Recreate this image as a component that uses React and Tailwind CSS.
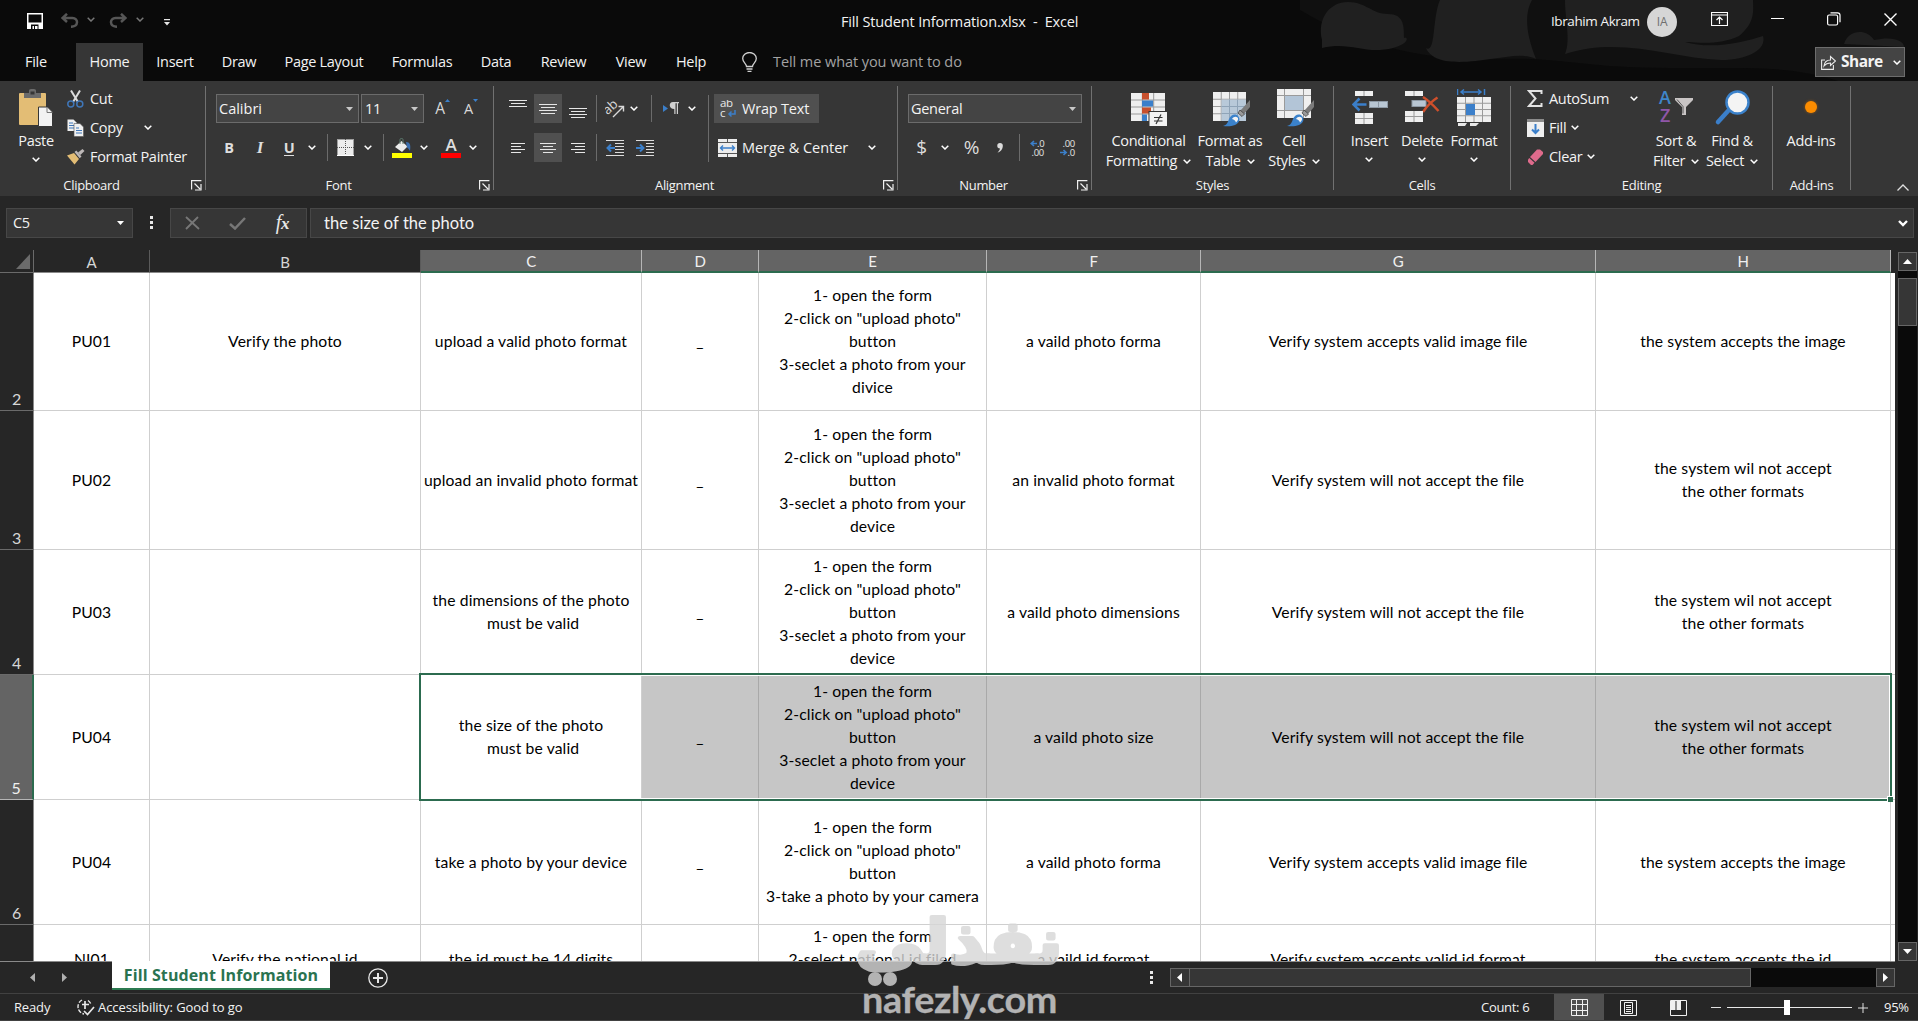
import React from "react";
import clsx from "clsx";

const columns = [
  { name: "A", width: 116 },
  { name: "B", width: 271 },
  { name: "C", width: 221, selected: true },
  { name: "D", width: 117, selected: true },
  { name: "E", width: 228, selected: true },
  { name: "F", width: 214, selected: true },
  { name: "G", width: 395, selected: true },
  { name: "H", width: 295, selected: true },
];

const steps = (last) => `1- open the form\n2-click on "upload photo"\nbutton\n3-seclet a photo from your\n${last}`;

const rows = [
  {
    number: 2,
    height: 138,
    cells: ["PU01", "Verify the photo", "upload a valid photo format", "_", steps("divice"), "a vaild photo forma", "Verify system accepts valid image file", "the system accepts the image"],
  },
  {
    number: 3,
    height: 139,
    cells: ["PU02", "", "upload an invalid photo format", "_", steps("device"), "an invalid photo format", "Verify system will not accept the file", "the system wil not accept\nthe other formats"],
  },
  {
    number: 4,
    height: 125,
    cells: ["PU03", "", "the dimensions of the photo\n\u00a0must be valid", "_", steps("device"), "a vaild photo dimensions", "Verify system will not accept the file", "the system wil not accept\nthe other formats"],
  },
  {
    number: 5,
    height: 125,
    selected: true,
    cells: ["PU04", "", "the size of the photo\n\u00a0must be valid", "_", steps("device"), "a vaild photo size", "Verify system will not accept the file", "the system wil not accept\nthe other formats"],
  },
  {
    number: 6,
    height: 125,
    cells: ["PU04", "", "take a photo by your device", "_", '1- open the form\n2-click on "upload photo"\nbutton\n3-take a photo by your camera', "a vaild photo forma", "Verify system accepts valid image file", "the system accepts the image"],
  },
  {
    number: 7,
    height: 69,
    cells: ["NI01", "Verify the national id", "the id must be 14 digits", "", "1- open the form\n2-select national id filed\n\u00a0", "a vaild id format", "Verify system accepts valid id format", "the system accepts the id"],
  },
];

const tabs = [
  { name: "Home", width: "w-[67px]", active: true },
  { name: "Insert", width: "w-16" },
  { name: "Draw", width: "w-16" },
  { name: "Page Layout", width: "w-[106px]" },
  { name: "Formulas", width: "w-[90px]" },
  { name: "Data", width: "w-[58px]" },
  { name: "Review", width: "w-[77px]" },
  { name: "View", width: "w-[58px]" },
  { name: "Help", width: "w-[62px]" },
];

function Chevron({ className = "text-white" }) {
  return (
    <svg className={clsx("h-[5px] w-2 shrink-0", className)} viewBox="0 0 8 5" fill="none" stroke="currentColor" strokeWidth="1.5">
      <path d="M.7.7 4 4 7.3.7" />
    </svg>
  );
}

function Caret({ className = "text-[#c8c8c8]" }) {
  return (
    <svg className={clsx("h-1 w-[7px] shrink-0", className)} viewBox="0 0 7 4" fill="currentColor">
      <path d="M0 0h7L3.5 4z" />
    </svg>
  );
}

function Slot({ className, children }) {
  return <div className={clsx("flex h-full shrink-0 items-center justify-center", className)}>{children}</div>;
}

function Divider({ className = "h-[27px]" }) {
  return <div className={clsx("w-px bg-[#6b6b6b]", className)} />;
}

function Group({ label, className, launcher, children }) {
  return (
    <div className={clsx("flex shrink-0", className)}>
      <div className="flex min-w-0 flex-1 flex-col">
        <div className="h-24">{children}</div>
        <div className="flex h-[18px] items-center text-[13px] tracking-[-0.3px]">
          <span className="flex-1 text-center">{label}</span>
          {launcher && (
            <div className="w-[22px] pb-px pl-[8px]">
              <svg className="size-[11px]" viewBox="0 0 11 11" fill="none" stroke="#f0f0f0" strokeWidth="1.2">
                <path d="M.6 9.5V.6h9.8M3.500 3.500l5.500 5.500M10 4v6H4" />
              </svg>
            </div>
          )}
        </div>
      </div>
      <div className="mt-[5px] h-[104px] w-px bg-[#717171]" />
    </div>
  );
}

function BigButton({ className, icon, lines, chevron = "inline" }) {
  return (
    <div className={clsx("flex flex-col items-center pt-2", className)}>
      <div className="flex h-[42px] items-start">{icon}</div>
      <div className="flex flex-col items-center leading-5 whitespace-nowrap">
        {lines.map((line, i) => (
          <span key={line} className="flex h-5 items-center gap-[6px]">
            {line}
            {chevron === "inline" && i === lines.length - 1 && <Chevron />}
          </span>
        ))}
        {chevron === "below" && <span className="flex h-4 items-center"><Chevron /></span>}
      </div>
    </div>
  );
}

/* Horizontal line sets used by the alignment buttons: [x, width] per line */
function Lines({ lines, height = 16, top = 0 }) {
  return (
    <svg width="18" height={height} viewBox={`0 0 18 ${height}`} fill="#e6e6e6">
      {lines.map(([x, w], i) => (
        <rect key={i} x={x} y={top + i * 3} width={w} height="1" />
      ))}
    </svg>
  );
}

function PasteIcon() {
  return (
    <svg width="34" height="38" viewBox="0 0 34 38">
      <rect y="4" width="27" height="32" rx="1" fill="#e3bd75" />
      <path d="M5 4h5V1.5Q10 0 12 0h3q2 0 2 1.500V4h5v5H5z" fill="#6b6b6b" />
      <rect x="11.500" y="2.500" width="4" height="3" fill="#363636" />
      <path d="M19.500 18h9l5 5v14.500h-14z" fill="#f2f2f2" stroke="#363636" />
      <path d="M28 18v5.500h5.500" fill="none" stroke="#777" />
    </svg>
  );
}

function CutIcon() {
  return (
    <svg width="17" height="18" viewBox="0 0 17 18" fill="none">
      <path d="M4 .5 11 12M13 .5 6 12" stroke="#dcdcdc" strokeWidth="2" />
      <circle cx="3.800" cy="14" r="3" stroke="#3f76b8" strokeWidth="1.500" />
      <circle cx="12.800" cy="14" r="3" stroke="#3f76b8" strokeWidth="1.500" />
    </svg>
  );
}

function CopyIcon() {
  return (
    <svg width="17" height="18" viewBox="0 0 17 18">
      <path d="M.5.500h6l3 3V12h-9z" fill="#f0f0f0" />
      <path d="M2 4h4M2 6.500h6M2 9h5" stroke="#3f76b8" />
      <path d="M7 4.500h6l3.500 3.500v9.500H7z" fill="#f0f0f0" stroke="#555" strokeWidth=".6" />
      <path d="M9 9h3M9 11.500h6M9 14h6" stroke="#3f76b8" />
    </svg>
  );
}

function BrushIcon() {
  return (
    <svg width="18" height="16" viewBox="0 0 18 16">
      <path d="M0 6.500 7 4l5 6-4.500 5.500z" fill="#e3bd75" />
      <path d="m7.500 3 1.800-1.500 5.200 6-1.800 1.800z" fill="#bdb8b8" />
      <path d="m11 3.500 4.500-3.500 2 2-4.200 4z" fill="#bdb8b8" />
    </svg>
  );
}

function TableGrid({ x, y, w, h, cols, rowCount }) {
  const cw = w / cols;
  const rh = h / rowCount;
  return (
    <g>
      <rect x={x} y={y} width={w} height={h} fill="#efefef" />
      {Array.from({ length: cols - 1 }, (_, i) => (
        <rect key={`c${i}`} x={x + cw * (i + 1) - 0.5} y={y} width="1" height={h} fill="#9a9a9a" />
      ))}
      {Array.from({ length: rowCount - 1 }, (_, i) => (
        <rect key={`r${i}`} x={x} y={y + rh * (i + 1) - 0.5} width={w} height="1" fill="#9a9a9a" />
      ))}
    </g>
  );
}

function PaintBrush() {
  return (
    <g>
      <path d="M37 11v7l-6 7-4-3z" fill="#7b7b7b" />
      <path d="m27 21 4.500 4-2.500 2.500-4-3.500z" fill="#9a9a9a" stroke="#363636" strokeWidth=".7" />
      <path d="M10 37c4-1 5-4 6-7 1.500-4 6-6 9-3 3 3.500 1 7-3 9-3.500 1.500-8 1.500-12 1z" fill="#3b82cb" />
      <path d="M19 30c1.500-2.500 4-3 5.500-1.500s0 3.500-1.500 5c-.5-2-2-3-4-3.500z" fill="#f4f4f4" />
    </g>
  );
}

function ConditionalIcon() {
  return (
    <svg className="ml-px" width="37" height="38" viewBox="0 0 37 38">
      <TableGrid x={0} y={4} w={34} h={28} cols={3} rowCount={4} />
      <rect x="11" y="4" width="7" height="6.500" fill="#c8502d" />
      <rect x="11" y="11.500" width="11" height="6" fill="#3b7fca" />
      <rect x="11" y="18.500" width="9" height="6" fill="#c8502d" />
      <rect x="11" y="25.500" width="5" height="6.500" fill="#3b7fca" />
      <rect x="18" y="22.500" width="18.500" height="15" fill="#f3f3f3" stroke="#363636" />
      <path d="M23 28.500h8.500M23 32h8.500M30 25.500 25 35" stroke="#333" strokeWidth="1.200" />
    </svg>
  );
}

function FormatTableIcon() {
  return (
    <svg className="ml-1" width="38" height="38" viewBox="0 0 38 38">
      <TableGrid x={0} y={3} w={33} h={29} cols={4} rowCount={4} />
      <path d="M8.500 10.500H33V32H8.500z" fill="#b8c9d9" />
      <path d="M16.500 10.500V32M24.500 10.500V32M8.500 17.500H33M8.500 24.500H33" stroke="#8fa4b8" />
      <PaintBrush />
    </svg>
  );
}

function CellStylesIcon() {
  return (
    <svg className="ml-1" width="38" height="38" viewBox="0 0 38 38">
      <rect width="34" height="29" fill="#efefef" />
      <path d="M0 6.500h34M0 21.500h34M7.500 0v29M26.500 0v29" stroke="#9a9a9a" />
      <rect x="8" y="7" width="18" height="14" fill="#b3c5d7" />
      <PaintBrush />
    </svg>
  );
}

function InsertIcon() {
  return (
    <svg width="36" height="38" viewBox="0 0 36 38">
      <TableGrid x={3} y={2} w={18} h={5} cols={2} rowCount={1} />
      <path d="M14.500 15.500H2M7.500 9.500l-6 6 6 6" fill="none" stroke="#3b7fca" strokeWidth="2.500" />
      <rect x="17.500" y="12.500" width="18" height="6" fill="#b8c6d3" stroke="#8d99a5" />
      <path d="M26.500 12v7" stroke="#8d99a5" />
      <TableGrid x={3} y={24} w={18} h={11} cols={2} rowCount={2} />
    </svg>
  );
}

function DeleteIcon() {
  return (
    <svg width="36" height="38" viewBox="0 0 36 38">
      <TableGrid x={1} y={2} w={18} h={5} cols={2} rowCount={1} />
      <rect x="8" y="11.500" width="14" height="6" fill="#b8c6d3" stroke="#8d99a5" />
      <path d="M19 8c5 3 11 9 15.500 14M33.500 8.500C28 12 23 17 19 23" fill="none" stroke="#cf4f2b" strokeWidth="2.500" />
      <TableGrid x={1} y={22} w={18} h={11} cols={2} rowCount={2} />
    </svg>
  );
}

function FormatIcon() {
  return (
    <svg width="34" height="38" viewBox="0 0 34 38">
      <path d="M.5 0v6M27.500 0v6M4 3h20M7 .5 4 3l3 2.500M21 .5 24 3l-3 2.500" fill="none" stroke="#3b7fca" strokeWidth="1.500" />
      <TableGrid x={0} y={8} w={34} h={25} cols={4} rowCount={4} />
      <rect x="9" y="15" width="9" height="11" fill="#3b7fca" />
      <path d="M1 34h9l-2 3H1zM13 34h9l-3 3h-6z" fill="#e8e8e8" />
    </svg>
  );
}

function SortIcon() {
  return (
    <svg width="36" height="38" viewBox="0 0 36 38">
      <text x="1" y="15" fontSize="18" fill="#3f86c9" fontFamily="Open Sans, sans-serif" fontWeight="600">A</text>
      <text x="2" y="33" fontSize="18" fill="#8f56a8" fontFamily="Open Sans, sans-serif" fontWeight="600">Z</text>
      <path d="M17 9h18v2l-7 7v8h-4v-8l-7-7z" fill="#c9c5c5" />
      <path d="m19 10.500 6 7v7" fill="none" stroke="#555" />
    </svg>
  );
}

function FindIcon() {
  return (
    <svg width="36" height="38" viewBox="0 0 36 38">
      <path d="M14 22 4 33" stroke="#3b7fca" strokeWidth="4.500" strokeLinecap="round" />
      <circle cx="23.500" cy="13.500" r="11" fill="#f4f4f4" stroke="#3b82cb" strokeWidth="2.500" />
    </svg>
  );
}

function TitleArt() {
  return (
    <svg className="absolute top-0 right-0" width="618" height="81" viewBox="0 0 618 81">
      <path d="M0 0h618v81h-80c-60-20-120-10-210-14-50-2-80-10-130-8C130 62 60 46 0 10z" fill="#101010" />
      <g fill="#202020">
        <path d="M22 40c-5-22 8-38 26-38s24 12 40 12 16 12 16 24c6-2 4 10-24 12-20 1-34-8-58-2z" />
        <path d="M126 48c10 6 6-30 14-48h92c-8 14-6 34 4 59-12-6-28-2-46 0-20 3-56 8-64-11z" />
        <path d="M265 54c6-14 0-34 0-54h188c0 10 3 22-14 36-22 10-40 6-54 6 26 8 60 0 78-6 4 14-16 24-42 24-50-2-100-24-156-6z" />
        <path d="M544 44c4-14 22-16 30-4 18-4 30 0 30 7z" />
      </g>
    </svg>
  );
}

function TitleBar() {
  return (
    <header className="relative h-[81px] overflow-hidden bg-[#0a0a0a]">
      <TitleArt />
      <div className="relative flex h-[43px] items-center">
        <div className="flex w-[841px] items-center pl-[27px]">
          <svg className="mb-[2px]" width="16" height="16" viewBox="0 0 16 16">
            <path fill="#fff" fillRule="evenodd" d="M0 0h16v16H0zM1.500 1.500v8h13v-8zM4 11.500V16h1.500v-3h1.500v3h1v-3h2.500v3h1v-4.500z" />
          </svg>
          <svg className="mb-[2px] ml-[18px]" width="18" height="15" viewBox="0 0 18 15" fill="none" stroke="#565656" strokeWidth="2.500">
            <path d="M6 .8 1.500 5 6 9M2 5h9.500c6 0 6.500 8.500-1.500 8.800" />
          </svg>
          <Chevron className="mb-1 ml-2 text-[#777]" />
          <svg className="mb-[2px] ml-[14px]" width="18" height="15" viewBox="0 0 18 15" fill="none" stroke="#565656" strokeWidth="2.500">
            <path d="M12 .8 16.500 5 12 9M16 5H6.500c-6 0-6.500 8.500 1.500 8.800" />
          </svg>
          <Chevron className="mb-1 ml-[9px] text-[#777]" />
          <svg className="mt-[2px] ml-[20px]" width="6" height="7" viewBox="0 0 6 7" fill="#e6e6e6">
            <path d="M0 0h6v1.200H0zM0 3h6L3 6.500z" />
          </svg>
        </div>
        <div className="w-[710px] tracking-[-0.15px] whitespace-pre">Fill Student Information.xlsx{"  "}-{"  "}Excel</div>
        <div className="w-[96px] text-[13.500px] tracking-[-0.4px] whitespace-nowrap">Ibrahim Akram</div>
        <div className="flex size-[30px] items-center justify-center rounded-full bg-[#d6d6d6] text-xs text-[#6f6f6f]">IA</div>
        <svg className="mb-[5px] ml-[34px]" width="17" height="14" viewBox="0 0 17 14" fill="none" stroke="#fff">
          <path d="M.5.500h16v13H.5zM.5 3h16M8.500 12V5.500M5.500 8l3-3 3 3" strokeWidth="1.200" />
        </svg>
        <div className="mb-[7px] ml-[43px] h-px w-[13px] bg-white" />
        <svg className="mb-[5px] ml-[43px]" width="14" height="14" viewBox="0 0 14 14" fill="none" stroke="#fff" strokeWidth="1.200">
          <rect x=".6" y="3" width="10" height="10" rx="1.500" />
          <path d="M3.500.800h7q2.500 0 2.500 2.500v7" />
        </svg>
        <svg className="mb-[5px] ml-[43px]" width="13" height="13" viewBox="0 0 13 13" stroke="#fff" strokeWidth="1.400">
          <path d="m.5.500 12 12M12.500.500l-12 12" />
        </svg>
      </div>
      <nav className="relative flex h-[38px] items-center">
        <div className="w-[76px] pl-[25px]">File</div>
        {tabs.map((tab) => (
          <div key={tab.name} className={clsx("flex h-full items-center justify-center whitespace-nowrap", tab.width, tab.active && "bg-[#363636]")}>
            {tab.name}
          </div>
        ))}
        <svg className="ml-5" width="15" height="20" viewBox="0 0 15 20" fill="none" stroke="#d0d0d0" strokeWidth="1.300">
          <path d="M4.500 14.500c0-3-3.800-4-3.800-8a6.800 6 0 0 1 13.600 0c0 4-3.800 5-3.800 8zM4.500 17h6M5.500 19.300h4" />
        </svg>
        <div className="ml-4 w-[1042px] tracking-[-0.07px] text-[#a3a3a3]">Tell me what you want to do</div>
        <div className="flex h-[30px] w-[90px] items-center border border-[#6d6d6d] bg-[#444] pl-[5px]">
          <svg width="15" height="15" viewBox="0 0 15 15" fill="none" stroke="#e8e8e8" strokeWidth="1.100">
            <path d="M4 5H.6v9.400h11.800V10M3 11c.5-4 3-6 6.500-6V1.500l5 4.500-5 4.500V8C6.500 8 4.500 9 3 11z" />
          </svg>
          <span className="ml-[5px] w-[52px] text-[15.500px] font-bold tracking-[-0.5px]">Share</span>
          <Chevron />
        </div>
      </nav>
    </header>
  );
}

function ClipboardGroup() {
  return (
    <Group label="Clipboard" className="w-[206px]" launcher>
      <div className="flex">
        <BigButton className="w-[67px] pl-[5px]" icon={<PasteIcon />} lines={["Paste"]} chevron="below" />
        <div className="flex flex-col pt-[3px]">
          <div className="flex h-[29px] items-center"><span className="w-[23px]"><CutIcon /></span>Cut</div>
          <div className="flex h-[29px] items-center">
            <span className="w-[23px]"><CopyIcon /></span>
            <span className="w-[54px]">Copy</span>
            <Chevron />
          </div>
          <div className="flex h-[29px] items-center whitespace-nowrap"><span className="w-[23px]"><BrushIcon /></span>Format Painter</div>
        </div>
      </div>
    </Group>
  );
}

function FontGroup() {
  return (
    <Group label="Font" className="w-[288px]" launcher>
      <div className="flex flex-col gap-[10px] pt-[13px] pl-[10px]">
        <div className="flex h-[29px] items-center">
          <div className="flex h-full w-[143px] items-center justify-between border border-[#6b6b6b] bg-[#444] pr-[5px] pl-[2px] tracking-normal">Calibri<Caret /></div>
          <div className="ml-[2px] flex h-full w-[63px] items-center justify-between border border-[#6b6b6b] bg-[#444] pr-[5px] pl-[3px]">11<Caret /></div>
          <Slot className="w-[37px] text-[15.500px] text-[#d8d8d8]">
            A<svg className="mb-4" width="5" height="3" viewBox="0 0 5 3" fill="#3b7fca"><path d="M0 3h5L2.500 0z" /></svg>
          </Slot>
          <Slot className="w-[20px] text-[#d8d8d8]">
            <span>A</span><svg className="mb-4" width="5" height="3" viewBox="0 0 5 3" fill="#3b7fca"><path d="M0 0h5L2.500 3z" /></svg>
          </Slot>
        </div>
        <div className="flex h-[29px] items-center text-[#dedede]">
          <Slot className="w-[26px] font-bold">B</Slot>
          <Slot className="w-9 text-[17px] font-bold italic"><span className="font-['Liberation_Serif',serif]">I</span></Slot>
          <Slot className="w-[22px] font-bold"><span className="border-b border-[#dedede] leading-[15px]">U</span></Slot>
          <Slot className="w-6"><Chevron /></Slot>
          <Slot className="w-[6px]"><Divider /></Slot>
          <Slot className="w-[31px]">
            <svg width="17" height="17" viewBox="0 0 17 17">
              <rect width="17" height="17" fill="#ededed" />
              <path d="M.5.500h16v16H.5zM8.500 0v17M0 8.500h17" fill="none" stroke="#555" strokeDasharray="1 1" />
              <path d="M0 16.500h17" stroke="#fff" />
            </svg>
          </Slot>
          <Slot className="w-[14px]"><Chevron /></Slot>
          <Slot className="w-4"><Divider /></Slot>
          <Slot className="w-[22px]">
            <svg width="20" height="20" viewBox="0 0 20 20">
              <path d="M3 9 9.500 3l6 5.500L10 14z" fill="#ececec" />
              <path d="M8 6V1.500Q8 .500 9.500.500t1.500 1V6" fill="none" stroke="#5c7a6e" />
              <path d="M14 4c4 0 5 3 4 9-1-2-2-3-3-3.500z" fill="#3b6fb0" />
              <path d="M0 15h20v5H0z" fill="#ff0" />
            </svg>
          </Slot>
          <Slot className="w-[22px]"><Chevron /></Slot>
          <Slot className="w-8">
            <span className="flex w-5 flex-col items-center border-b-[5px] border-[#f00] text-[17px] leading-4 font-semibold">A</span>
          </Slot>
          <Slot className="w-3"><Chevron /></Slot>
        </div>
      </div>
    </Group>
  );
}

function AlignmentGroup() {
  return (
    <Group label="Alignment" className="w-[404px]" launcher>
      <div className="flex pt-[13px] pl-[10px]">
        <div className="flex w-[199px] flex-col gap-[10px]">
          <div className="flex h-[29px] items-center">
            <Slot className="w-[28px]"><Lines lines={[[0, 18], [2, 14], [0, 18]]} top={0} height={18} /></Slot>
            <Slot className="ml-[2px] w-7 bg-[#505050]"><Lines lines={[[0, 18], [2, 14], [0, 18], [2, 14]]} top={3} /></Slot>
            <Slot className="w-8"><Lines lines={[[0, 18], [2, 14], [0, 18], [2, 14]]} top={8} height={18} /></Slot>
            <Slot className="w-1"><Divider /></Slot>
            <Slot className="w-[33px]">
              <svg width="20" height="18" viewBox="0 0 20 18" fill="none" stroke="#d9d9d9">
                <text x="-1" y="12" fontSize="13" fill="#d9d9d9" stroke="none" transform="rotate(-42 5 9)" fontFamily="Open Sans, sans-serif">ab</text>
                <path d="M8 17 18 7M13.500 6.500h5v5" strokeWidth="1.400" />
              </svg>
            </Slot>
            <Slot className="w-[6px]"><Chevron /></Slot>
            <Slot className="w-[29px]"><Divider /></Slot>
            <Slot className="w-[10px]">
              <svg className="shrink-0" width="16" height="13" viewBox="0 0 16 13">
                <path d="M0 3v7l5-3.500z" fill="#3b7fca" />
                <path d="M10 0h6v1.200h-1V12h-1.200V1.200h-1.300V12h-1.200V7C5.500 7 5.500 0 10 0z" fill="#d0d0d0" />
              </svg>
            </Slot>
            <Slot className="w-[32px]"><Chevron /></Slot>
          </div>
          <div className="flex h-[29px] items-center">
            <Slot className="w-[28px]"><Lines lines={[[2, 14], [2, 10], [2, 14], [2, 10]]} top={3} /></Slot>
            <Slot className="ml-[2px] w-7 bg-[#505050]"><Lines lines={[[1, 16], [4, 10], [1, 16], [4, 10]]} top={3} /></Slot>
            <Slot className="w-8"><Lines lines={[[2, 14], [6, 10], [2, 14], [6, 10]]} top={3} /></Slot>
            <Slot className="w-1"><Divider /></Slot>
            <Slot className="w-[33px]">
              <svg width="18" height="16" viewBox="0 0 18 16">
                <path d="M0 .5h18M9 3.500h9M9 6.500h9M9 9.500h9M9 12.500h9M0 15.500h18" stroke="#dcdcdc" />
                <path d="M9 8H2M5 4.500 1.500 8 5 11.500" fill="none" stroke="#3b7fca" strokeWidth="2" />
              </svg>
            </Slot>
            <Slot className="w-[27px]">
              <svg width="18" height="16" viewBox="0 0 18 16">
                <path d="M0 .5h18M10 3.500h8M10 6.500h8M10 9.500h8M10 12.500h8M0 15.500h18" stroke="#dcdcdc" />
                <path d="M0 8h7M4 4.500 7.500 8 4 11.500" fill="none" stroke="#3b7fca" strokeWidth="2" />
              </svg>
            </Slot>
          </div>
        </div>
        <div className="flex w-[11px] justify-center pt-px"><Divider className="h-[67px]" /></div>
        <div className="flex flex-col gap-[10px]">
          <div className="flex h-[29px] w-[105px] items-center bg-[#505050] pl-[6px]">
            <svg width="17" height="18" viewBox="0 0 17 18">
              <text x="0" y="7" fontSize="11.500" fill="#e8e8e8" fontFamily="Open Sans, sans-serif">ab</text>
              <text x="0" y="17" fontSize="11.500" fill="#e8e8e8" fontFamily="Open Sans, sans-serif">c</text>
              <path d="M15 10v4H9M11.500 11.500 9 14l2.500 2.500" fill="none" stroke="#3b7fca" strokeWidth="1.500" />
            </svg>
            <span className="ml-[5px] tracking-[-0.2px] whitespace-nowrap">Wrap Text</span>
          </div>
          <div className="flex h-[29px] items-center pl-1">
            <svg width="19" height="18" viewBox="0 0 19 18">
              <path d="M0 0h19v18H0z" fill="#ececec" />
              <path d="M9.500 0v4M9.500 14v4M0 3.500h19M0 14.500h19" stroke="#555" />
              <path d="M2.500 9h14M5 6.500 2.500 9 5 11.500M14 6.500 16.500 9 14 11.500" fill="none" stroke="#3b7fca" strokeWidth="1.400" />
            </svg>
            <span className="ml-[5px] w-[126px] tracking-[-0.03px] whitespace-nowrap">Merge &amp; Center</span>
            <Chevron />
          </div>
        </div>
      </div>
    </Group>
  );
}

function NumberGroup() {
  return (
    <Group label="Number" className="w-[194px]" launcher>
      <div className="flex flex-col gap-[10px] pt-[13px] pl-[10px]">
        <div className="flex h-[29px] w-[174px] items-center justify-between border border-[#6b6b6b] bg-[#444] pr-[5px] pl-[2px]">General<Caret /></div>
        <div className="flex h-[29px] items-center text-[#dcdcdc]">
          <Slot className="w-[27px] text-[19px]">$</Slot>
          <Slot className="w-5"><Chevron /></Slot>
          <Slot className="w-[33px] text-[19px]">%</Slot>
          <Slot className="w-6">
            <svg width="6" height="10" viewBox="0 0 6 10" fill="#dcdcdc"><path d="M3 0a2.800 2.800 0 0 1 2.800 3C5.800 6 3.500 9 .5 9.500 2 8 3 6.500 3 5.500A2.700 2.700 0 0 1 3 0z" /></svg>
          </Slot>
          <Slot className="w-[14px]"><Divider /></Slot>
          <Slot className="w-[24px]">
            <svg width="16" height="18" viewBox="0 0 16 18" fontFamily="Open Sans, sans-serif" fontSize="9.500" fill="#e4e4e4">
              <text x="7" y="8">.0</text>
              <text x="1.500" y="17">.00</text>
              <path d="M7 4.500H1.500M4 2 1.200 4.500 4 7" fill="none" stroke="#3b7fca" strokeWidth="1.600" />
            </svg>
          </Slot>
          <Slot className="w-9">
            <svg width="16" height="18" viewBox="0 0 16 18" fontFamily="Open Sans, sans-serif" fontSize="9.500" fill="#e4e4e4">
              <text x="2.500" y="8">.00</text>
              <text x="7.500" y="17">.0</text>
              <path d="M0 13.500h6M3.500 11 6.200 13.500 3.500 16" fill="none" stroke="#3b7fca" strokeWidth="1.600" />
            </svg>
          </Slot>
        </div>
      </div>
    </Group>
  );
}

function Ribbon() {
  return (
    <section className="relative flex h-[115px] bg-[#363636]">
      <ClipboardGroup />
      <FontGroup />
      <AlignmentGroup />
      <NumberGroup />
      <Group label="Styles" className="w-[242px]">
        <div className="flex pl-[10px]">
          <BigButton className="w-[93px]" icon={<ConditionalIcon />} lines={["Conditional", "Formatting"]} />
          <BigButton className="w-[70px]" icon={<FormatTableIcon />} lines={["Format as", "Table"]} />
          <BigButton className="w-[58px]" icon={<CellStylesIcon />} lines={["Cell", "Styles"]} />
        </div>
      </Group>
      <Group label="Cells" className="w-[177px]">
        <div className="flex pl-[9px]">
          <BigButton className="w-[53px]" icon={<InsertIcon />} lines={["Insert"]} chevron="below" />
          <BigButton className="w-[52px]" icon={<DeleteIcon />} lines={["Delete"]} chevron="below" />
          <BigButton className="w-[52px]" icon={<FormatIcon />} lines={["Format"]} chevron="below" />
        </div>
      </Group>
      <Group label="Editing" className="w-[262px]">
        <div className="flex">
          <div className="flex w-[137px] flex-col pt-[3px] pl-[16px]">
            <div className="flex h-[29px] items-center">
              <svg width="16" height="17" viewBox="0 0 16 17" fill="none" stroke="#e3e3e3" strokeWidth="2"><path d="M14.500 4V1H2l6.500 7.500L2 16h12.500v-3" /></svg>
              <span className="ml-[6px] w-[81px]">AutoSum</span>
              <Chevron />
            </div>
            <div className="flex h-[29px] items-center">
              <svg width="17" height="18" viewBox="0 0 17 18">
                <path d="M0 0h17v18H0z" fill="#efefef" /><path d="M0 0h17v3H0z" fill="#8c8c8c" />
                <path d="M8.500 5v9M5 10.500 8.500 14l3.500-3.500" fill="none" stroke="#3b7fca" strokeWidth="2" />
              </svg>
              <span className="mr-[5px] ml-[5px]">Fill</span>
              <Chevron />
            </div>
            <div className="flex h-[29px] items-center">
              <svg width="17" height="16" viewBox="0 0 17 16">
                <path d="M10 .5h3L16 3v2L8.500 13 3 8z" fill="#df6b8c" />
                <path d="m2.300 9 5.200 4.800L5.500 16H4L1 13v-2.500z" fill="#df6b8c" />
              </svg>
              <span className="mr-[5px] ml-[5px]">Clear</span>
              <Chevron />
            </div>
          </div>
          <BigButton className="w-[56px]" icon={<SortIcon />} lines={["Sort &", "Filter"]} />
          <BigButton className="w-[56px]" icon={<FindIcon />} lines={["Find &", "Select"]} />
        </div>
      </Group>
      <Group label="Add-ins" className="w-[78px]">
        <BigButton className="pr-px" icon={<span className="mt-3 size-3 rounded-full bg-[#fb8c00] shadow-[0_0_3px_#9a5a10]" />} lines={["Add-ins"]} chevron="none" />
      </Group>
      <div className="flex flex-1 items-end justify-end pr-[9px] pb-[5px]">
        <svg width="12" height="7" viewBox="0 0 12 7" fill="none" stroke="#e0e0e0" strokeWidth="1.300"><path d="m.5 6.500 5.500-5.500 5.500 5.500" /></svg>
      </div>
    </section>
  );
}

function FormulaBar() {
  return (
    <section className="flex h-[54px] items-start bg-[#262626] pt-3 pl-[6px]">
      <div className="flex h-[30px] w-[127px] items-center justify-between border border-[#474747] bg-[#363636] pr-[8px] pl-[6px]">C5<Caret className="text-white" /></div>
      <div className="flex h-[29px] w-[37px] flex-col items-center justify-center gap-[2px]">
        {[0, 1, 2].map((n) => <span key={n} className="size-[3px] bg-[#e8e8e8]" />)}
      </div>
      <div className="flex h-[30px] w-[137px] items-center border border-[#474747] bg-[#363636]">
        <Slot className="w-[43px]">
          <svg width="15" height="14" viewBox="0 0 15 14" stroke="#777" strokeWidth="1.800"><path d="m1 1 13 12M13 1 1 13" /></svg>
        </Slot>
        <Slot className="w-[47px]">
          <svg width="17" height="13" viewBox="0 0 17 13" fill="none" stroke="#777" strokeWidth="2.500"><path d="m1 7 5 4.500L16 1" /></svg>
        </Slot>
        <Slot className="w-[43px] text-[20px] text-[#e8e8e8]"><span className="pb-[3px] font-['Liberation_Serif',serif] italic">f<span className="text-[17px] font-bold">x</span></span></Slot>
      </div>
      <div className="ml-[3px] flex h-[30px] w-[1604px] items-center justify-between border border-[#474747] bg-[#363636] pr-[5px] pl-[13px]">
        <span className="font-[Lato,sans-serif] text-[16.500px] tracking-[0.05px]">the size of the photo</span>
        <svg width="10" height="7" viewBox="0 0 10 7" fill="none" stroke="#fff" strokeWidth="2.400"><path d="m1 1 4 4 4-4" /></svg>
      </div>
    </section>
  );
}

function Sheet() {
  return (
    <section className="flex h-[711px] bg-[#262626]">
      <div className="relative w-[1895px] overflow-hidden font-[Lato,sans-serif]">
        <div className="flex h-[23px] text-[15px] text-[#d6d6d6]">
          <div className="flex w-[34px] items-end justify-end border-r border-b border-[#6a6a6a] pr-[3px] pb-[3px]">
            <svg width="14" height="15" viewBox="0 0 14 15" fill="#6b6b6b"><path d="M14 0v15H0z" /></svg>
          </div>
          {columns.map((col) => (
            <div
              key={col.name}
              style={{ width: col.width }}
              className={clsx(
                "flex shrink-0 items-center justify-center border-r pt-[2px]",
                col.selected ? "border-b-2 border-r-[#b5b5b5] border-b-[#2c6b4f] bg-[#646464] text-[#f0f0f0]" : "border-b border-r-[#5a5a5a] border-b-[#8a8a8a]"
              )}
            >
              {col.name}
            </div>
          ))}
        </div>
        {rows.map((row) => (
          <div key={row.number} className="flex" style={{ height: row.height }}>
            <div
              className={clsx(
                "flex w-[34px] shrink-0 items-end justify-center border-b text-[16px] leading-[22px]",
                row.selected ? "border-r-2 border-r-[#2c6b4f] border-b-[#b5b5b5] bg-[#646464] text-[#f0f0f0]" : "border-r border-r-[#8a8a8a] border-b-[#6a6a6a] text-[#d6d6d6]"
              )}
            >
              {row.number}
            </div>
            {row.cells.map((text, i) => (
              <div
                key={columns[i].name}
                style={{ width: columns[i].width }}
                className={clsx(
                  "flex shrink-0 items-center justify-center border-r border-b text-center text-[15.700px] leading-[23px] tracking-[0.12px] whitespace-pre text-black",
                  row.selected && i > 2 ? "border-[#a9a9a9] bg-[#c6c6c6]" : "border-[#cfcfcf] bg-white"
                )}
              >
                {text}
              </div>
            ))}
            <div className="flex-1 border-b border-[#cfcfcf] bg-white" />
          </div>
        ))}
        <div className="absolute top-[423px] left-[419px] h-[128px] w-[1473px] border-2 border-[#2c6b4f]">
          <div className="size-full border border-white" />
          <span className="absolute -right-[3px] -bottom-[3px] size-[6px] border-t border-l border-white bg-[#2c6b4f]" />
        </div>
      </div>
      <div className="flex w-[23px] flex-col pt-[2px] pl-[3px]">
        <div className="flex h-[19px] w-[19px] items-center justify-center border border-[#666] bg-[#363636]">
          <svg width="9" height="5" viewBox="0 0 9 5" fill="#fff"><path d="M0 5h9L4.500 0z" /></svg>
        </div>
        <div className="w-[19px] flex-1 bg-[#0a0a0a] pt-[7px]">
          <div className="h-12 border border-[#666] bg-[#363636]" />
        </div>
        <div className="flex h-[19px] w-[19px] items-center justify-center border border-[#666] bg-[#363636]">
          <svg width="9" height="5" viewBox="0 0 9 5" fill="#fff"><path d="M0 0h9L4.500 5z" /></svg>
        </div>
      </div>
    </section>
  );
}

function SheetTabs() {
  return (
    <section className="flex h-8 items-start bg-[#262626]">
      <div className="flex h-8 w-[112px] items-center gap-[27px] border-t border-[#8a8a8a] pl-[30px]">
        <svg width="5" height="9" viewBox="0 0 5 9" fill="#b0b0b0"><path d="M5 0v9L0 4.500z" /></svg>
        <svg width="5" height="9" viewBox="0 0 5 9" fill="#b0b0b0"><path d="M0 0v9l5-4.500z" /></svg>
      </div>
      <div className="flex h-[29px] w-[218px] items-center justify-center border-b-2 border-[#2c7a50] bg-white text-[16px] font-bold tracking-[0.1px] whitespace-nowrap text-[#2a7350]">
        Fill Student Information
      </div>
      <div className="flex h-8 w-[1565px] items-center border-t border-[#8a8a8a] pl-[38px]">
        <svg width="20" height="20" viewBox="0 0 20 20" fill="none" stroke="#e8e8e8">
          <circle cx="10" cy="10" r="9.200" strokeWidth="1.300" />
          <path d="M10 5v10M5 10h10" strokeWidth="2" />
        </svg>
        <div className="ml-[762px] flex flex-col gap-[2px]">
          {[0, 1, 2].map((n) => <span key={n} className="size-[3px] bg-[#e8e8e8]" />)}
        </div>
        <div className="ml-[17px] flex h-[19px] w-[725px] bg-[#0a0a0a]">
          <div className="flex w-5 items-center justify-center border border-[#666] bg-[#363636] pr-[2px]">
            <svg width="5" height="9" viewBox="0 0 5 9" fill="#fff"><path d="M5 0v9L0 4.500z" /></svg>
          </div>
          <div className="w-[561px] border border-l-0 border-[#666] bg-[#363636]" />
          <div className="ml-auto flex w-[19px] items-center justify-center border border-[#666] bg-[#363636]">
            <svg width="5" height="9" viewBox="0 0 5 9" fill="#fff"><path d="M0 0v9l5-4.500z" /></svg>
          </div>
        </div>
      </div>
    </section>
  );
}

function StatusBar() {
  return (
    <footer className="flex h-7 items-center border-t border-b border-[#414141] bg-[#262626] pt-px text-[13px] tracking-[-0.15px] whitespace-nowrap">
      <div className="w-[76px] pl-[14px]">Ready</div>
      <svg width="19" height="17" viewBox="0 0 19 17" fill="none" stroke="#e8e8e8">
        <path d="M6 1a7.500 7.500 0 0 0 2 14M12 1.500a7 7 0 0 1 3 4" strokeWidth="1.400" strokeDasharray="4 1.500" />
        <path d="M9 2v8M6 5.500h7M8 12l3.500 3.500L18 8" strokeWidth="1.700" />
      </svg>
      <div className="ml-[3px] w-[1383px] tracking-[-0.08px]">Accessibility: Good to go</div>
      <div className="w-[73px] tracking-[-0.3px]">Count: 6</div>
      <div className="-mt-px flex h-[26px] w-[50px] items-center justify-center bg-[#505050]">
        <svg width="17" height="17" viewBox="0 0 17 17" fill="none" stroke="#f0f0f0"><path d="M.5.500h16v16H.5zM5.500 0v17M11.500 0v17M0 5.500h17M0 11.500h17" /></svg>
      </div>
      <svg className="ml-4" width="17" height="16" viewBox="0 0 17 16" fill="none" stroke="#f0f0f0"><path d="M.5.500h16v15H.5zM4.500 2.500h8v11h-8zM6 5.500h5M6 7.500h5M6 9.500h5M6 11.500h5" /></svg>
      <svg className="ml-[33px]" width="17" height="16" viewBox="0 0 17 16" fill="none" stroke="#f0f0f0"><path d="M.5.500h16v15H.5z" /><path d="M1 1h4.500v9H1zM6.500 1H11v9H6.500z" fill="#f0f0f0" stroke="none" /></svg>
      <div className="ml-6 h-px w-[10px] bg-[#e0e0e0]" />
      <div className="ml-[6px] flex h-[15px] w-[125px] items-center">
        <div className="h-px w-[57px] bg-[#e8e8e8]" />
        <div className="h-[15px] w-[6px] bg-white" />
        <div className="h-px flex-1 bg-[#e8e8e8]" />
      </div>
      <svg className="ml-[6px]" width="10" height="10" viewBox="0 0 10 10" stroke="#e0e0e0"><path d="M5 0v10M0 5h10" /></svg>
      <div className="ml-4 tracking-[-0.3px]">95%</div>
    </footer>
  );
}

function Watermark() {
  return (
    <div className="absolute top-[900px] left-[850px] text-[#d7d7d7] opacity-80">
      <svg width="218" height="121" viewBox="0 0 218 121" fill="currentColor" stroke="currentColor">
        <text x="109" y="63" textAnchor="middle" textLength="207" lengthAdjust="spacingAndGlyphs" fontSize="60" fontWeight="700" strokeWidth="4" strokeLinejoin="round" fontFamily="DejaVu Sans, sans-serif">نفذلى</text>
        <circle cx="25" cy="79" r="7" strokeWidth="0" />
        <circle cx="40" cy="79" r="7" strokeWidth="0" />
        <text x="12" y="113" textLength="195" lengthAdjust="spacingAndGlyphs" fontSize="36" fontWeight="700" strokeWidth=".3" fontFamily="Lato, sans-serif">nafezly.com</text>
      </svg>
    </div>
  );
}

export default function App() {
  return (
    <div className="relative flex h-[1021px] w-[1918px] flex-col overflow-hidden bg-[#262626] font-['Open_Sans',sans-serif] text-[14.500px] tracking-[-0.3px] text-[#f3f3f3]">
      <TitleBar />
      <Ribbon />
      <FormulaBar />
      <Sheet />
      <SheetTabs />
      <StatusBar />
      <Watermark />
    </div>
  );
}
